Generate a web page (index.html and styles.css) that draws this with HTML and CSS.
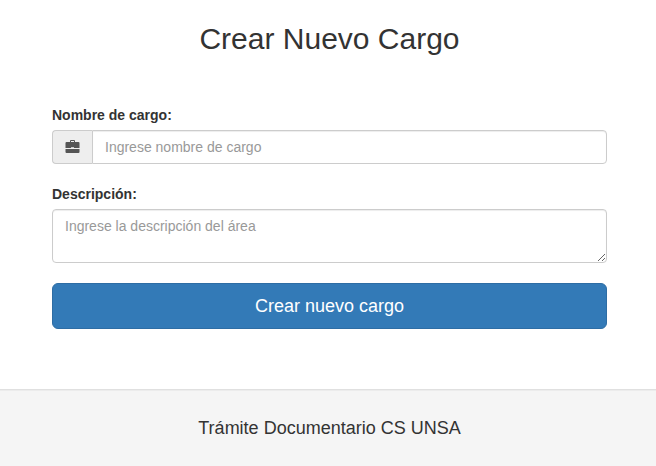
FILE: index.html
```html
<!DOCTYPE html>
<html lang="es">
<head>
<meta charset="utf-8">
<title>Crear Nuevo Cargo</title>
<link rel="stylesheet" href="styles.css">
</head>
<body>
<main class="container">
  <h2 class="title">Crear Nuevo Cargo</h2>
  <form>
    <div class="form-group">
      <label for="nombre">Nombre de cargo:</label>
      <div class="input-group">
        <span class="addon"><svg class="icon" viewBox="0 0 15 14" aria-hidden="true"><path d="M5 2V1q0-1 1-1h3q1 0 1 1v1h3.500q1 0 1 1V8H9V7.200H6V8H.5V3q0-1 1-1zM6 2h3V1H6zM.5 9h14v3q0 1-1 1h-12q-1 0-1-1z"/></svg></span>
        <input id="nombre" class="control" type="text" placeholder="Ingrese nombre de cargo">
      </div>
    </div>
    <div class="form-group">
      <label for="descripcion">Descripción:</label>
      <textarea id="descripcion" class="control" rows="2" placeholder="Ingrese la descripción del área"></textarea>
    </div>
    <button class="submit" type="button">Crear nuevo cargo</button>
  </form>
</main>
<footer class="footer">Trámite Documentario CS UNSA</footer>
</body>
</html>
```
FILE: styles.css
```css
* { box-sizing: border-box; }
body {
  margin: 0;
  height: 466px;
  display: flex;
  flex-direction: column;
  overflow: hidden;
  font: 14px/20px "Liberation Sans", Arial, sans-serif;
  color: #333;
  background: #fff;
}
.container { height: 389px; padding: 22px 49px 0 52px; }
.title { margin: 0 0 50px; font-size: 30px; line-height: 33px; font-weight: 400; text-align: center; }
.form-group { margin-bottom: 20px; }
label { display: block; margin-bottom: 5px; font-weight: 700; }
.input-group { display: flex; }
.addon {
  width: 40px;
  flex: none;
  padding: 9px 0 0 12px;
  background: #eee;
  border: 1px solid #ccc;
  border-right: 0;
  border-radius: 4px 0 0 4px;
}
.icon { display: block; width: 15px; height: 14px; fill: #555; }
.control {
  display: block;
  width: 100%;
  height: 34px;
  padding: 6px 12px;
  font: inherit;
  color: #555;
  border: 1px solid #ccc;
  border-radius: 4px;
  background: #fff;
  box-shadow: inset 0 1px 1px rgba(0, 0, 0, .075);
}
.control::placeholder { color: #999; opacity: 1; }
.input-group .control { flex: 1; border-radius: 0 4px 4px 0; }
textarea.control { height: 54px; resize: vertical; }
.submit {
  display: block;
  width: 100%;
  height: 46px;
  padding: 0 16px;
  font: 18px/24px "Liberation Sans", Arial, sans-serif;
  color: #fff;
  background: #337ab7;
  border: 1px solid #2e6da4;
  border-radius: 6px;
}
.footer {
  flex: 1;
  padding: 28px 0 0 3px;
  font-size: 18px;
  text-align: center;
  background: #f5f5f5;
  border-top: 1px solid #e0e0e0;
  box-shadow: inset 0 1px 0 #ececec;
}
```
